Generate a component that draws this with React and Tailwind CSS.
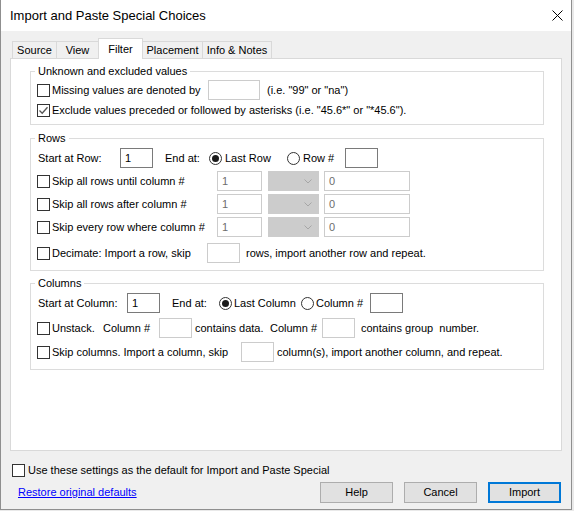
import React from 'react';

const CheckBox = ({ checked }) => (
  <span className="w-[13px] h-[13px] shrink-0 border border-[#333333] bg-white flex items-center justify-center">
    {checked && (
      <svg width="11" height="11" viewBox="0 0 11 11">
        <path d="M1.5 5.5 L4.2 8.2 L9.5 2.2" fill="none" stroke="#555555" strokeWidth="1.3" />
      </svg>
    )}
  </span>
);

const Radio = ({ checked }) => (
  <span className="w-[13px] h-[13px] shrink-0 rounded-full border border-[#333333] bg-white flex items-center justify-center">
    {checked && <span className="w-[7px] h-[7px] rounded-full bg-[#1a1a1a]" />}
  </span>
);

// text box: dark border when enabled, light grey when disabled
const Box = ({ className = '', value, dark }) => (
  <span
    className={`h-[20px] shrink-0 bg-white border flex items-center pl-[4px] ${
      dark ? 'border-[#7a7a7a] text-black' : 'border-[#cccccc] text-[#6d6d6d]'
    } ${className}`}
  >
    {value}
  </span>
);

const Select = ({ className = '' }) => (
  <span className={`h-[20px] shrink-0 bg-[#cccccc] border border-[#cccccc] flex items-center justify-end pr-[6px] ${className}`}>
    <svg width="8" height="5" viewBox="0 0 8 5">
      <path d="M0.5 0.5 L4 4 L7.5 0.5" fill="none" stroke="#a6a6a6" />
    </svg>
  </span>
);

const Group = ({ title, className = '', children }) => (
  <fieldset className={`border border-[#dcdcdc] ml-[19px] mr-[17px] ${className}`}>
    <legend className="ml-[4px] px-[3px] h-[16px] leading-[16px]">{title}</legend>
    {children}
  </fieldset>
);

const Tab = ({ className = '', children }) => (
  <div className={`h-[17px] shrink-0 border-t border-[#d9d9d9] bg-[#f0f0f0] flex items-center justify-center ${className}`}>
    {children}
  </div>
);

const Button = ({ primary, children }) => (
  <div
    className={`w-[73px] h-[21px] bg-[#e1e1e1] flex items-center justify-center ${
      primary ? 'border-2 border-[#0078d7]' : 'border border-[#adadad]'
    }`}
  >
    {children}
  </div>
);

const SkipRow = ({ label }) => (
  <div className="flex items-center h-[20px] mt-[3px] pl-[6px]">
    <CheckBox />
    <span className="w-[167px] shrink-0 pl-[2px] whitespace-nowrap">{label}</span>
    <Box className="w-[45px]" value="1" />
    <Select className="ml-[6px] w-[51px]" />
    <Box className="ml-[5px] w-[86px]" value="0" />
  </div>
);

export default function App() {
  return (
    <div className="w-[574px] h-[511px] bg-[#e9e9e9] font-['Liberation_Sans',Arial,sans-serif] text-[11px] text-black">
      <div className="w-[572px] h-[510px] bg-[#f0f0f0] border-x border-b border-[#8f8f8f] flex flex-col">
        {/* Title bar */}
        <div className="h-[31px] shrink-0 bg-white flex items-center justify-between pl-[9px] pr-[8px]">
          <span className="text-[13px]">Import and Paste Special Choices</span>
          <svg width="11" height="11" viewBox="0 0 11 11">
            <path d="M0.5 0.5 L10.5 10.5 M10.5 0.5 L0.5 10.5" stroke="#000000" strokeWidth="1" />
          </svg>
        </div>

        {/* Tabs */}
        <div className="flex items-end h-[20px] mt-[7px] ml-[11px]">
          <Tab className="w-[44px] border-l">Source</Tab>
          <Tab className="w-[42px] border-l">View</Tab>
          <div className="relative z-10 w-[45px] h-[21px] mb-[-1px] bg-white border-t border-x border-[#d9d9d9] flex items-center justify-center">
            Filter
          </div>
          <Tab className="w-[59px]">Placement</Tab>
          <Tab className="w-[70px] border-x">Info &amp; Notes</Tab>
        </div>

        {/* Tab panel */}
        <div className="ml-[9px] mr-[9px] h-[393px] shrink-0 bg-white border border-[#d9d9d9]">
          <Group title="Unknown and excluded values" className="mt-[4px] pb-[4px]">
            <div className="flex items-center h-[20px] mt-[1px] pl-[6px]">
              <CheckBox />
              <span className="w-[156px] shrink-0 ml-[2px] whitespace-nowrap">Missing values are denoted by</span>
              <Box className="w-[52px]" />
              <span className="ml-[7px] whitespace-nowrap">(i.e. "99" or "na")</span>
            </div>
            <div className="flex items-center h-[20px] pl-[6px]">
              <CheckBox checked />
              <span className="ml-[2px] whitespace-nowrap">
                Exclude values preceded or followed by asterisks (i.e. "45.6*" or "*45.6").
              </span>
            </div>
          </Group>

          <Group title="Rows" className="mt-[5px] pb-[7px]">
            <div className="flex items-center h-[20px] mt-[2px] pl-[7px]">
              <span className="w-[82px] shrink-0">Start at Row:</span>
              <Box dark className="w-[33px]" value="1" />
              <span className="w-[56px] shrink-0 pl-[12px]">End at:</span>
              <Radio checked />
              <span className="w-[65px] shrink-0 pl-[3px]">Last Row</span>
              <Radio />
              <span className="w-[45px] shrink-0 pl-[3px]">Row #</span>
              <Box dark className="w-[33px]" />
            </div>
            <SkipRow label="Skip all rows until column #" />
            <SkipRow label="Skip all rows after column #" />
            <SkipRow label="Skip every row where column #" />
            <div className="flex items-center h-[20px] mt-[6px] pl-[6px]">
              <CheckBox />
              <span className="w-[157px] shrink-0 pl-[2px] whitespace-nowrap">Decimate: Import a row, skip</span>
              <Box className="w-[33px]" />
              <span className="ml-[6px] whitespace-nowrap">rows, import another row and repeat.</span>
            </div>
          </Group>

          <Group title="Columns" className="mt-[4px] pb-[7px]">
            <div className="flex items-center h-[20px] mt-[2px] pl-[7px]">
              <span className="w-[89px] shrink-0">Start at Column:</span>
              <Box dark className="w-[33px]" value="1" />
              <span className="w-[59px] shrink-0 pl-[12px]">End at:</span>
              <Radio checked />
              <span className="w-[69px] shrink-0 pl-[2px]">Last Column</span>
              <Radio />
              <span className="w-[56px] shrink-0 pl-[2px]">Column #</span>
              <Box dark className="w-[33px]" />
            </div>
            <div className="flex items-center h-[20px] mt-[5px] pl-[6px]">
              <CheckBox />
              <span className="w-[53px] shrink-0 pl-[2px]">Unstack.</span>
              <span className="w-[56px] shrink-0">Column #</span>
              <Box className="w-[33px]" />
              <span className="w-[78px] shrink-0 pl-[3px] whitespace-nowrap">contains data.</span>
              <span className="w-[52px] shrink-0">Column #</span>
              <Box className="w-[33px]" />
              <span className="ml-[6px] whitespace-pre">contains group  number.</span>
            </div>
            <div className="flex items-center h-[20px] mt-[4px] pl-[6px]">
              <CheckBox />
              <span className="w-[191px] shrink-0 pl-[2px] whitespace-nowrap">Skip columns. Import a column, skip</span>
              <Box className="w-[33px]" />
              <span className="ml-[3px] whitespace-nowrap">column(s), import another column, and repeat.</span>
            </div>
          </Group>
        </div>

        {/* Footer */}
        <div className="flex items-center h-[13px] mt-[13px] ml-[11px]">
          <CheckBox />
          <span className="ml-[3px] whitespace-nowrap">Use these settings as the default for Import and Paste Special</span>
        </div>
        <div className="flex items-center justify-between mt-[5px] ml-[17px] mr-[10px]">
          <span className="text-[#0000ff] underline">Restore original defaults</span>
          <div className="flex gap-[11px]">
            <Button>Help</Button>
            <Button>Cancel</Button>
            <Button primary>Import</Button>
          </div>
        </div>
      </div>
    </div>
  );
}
